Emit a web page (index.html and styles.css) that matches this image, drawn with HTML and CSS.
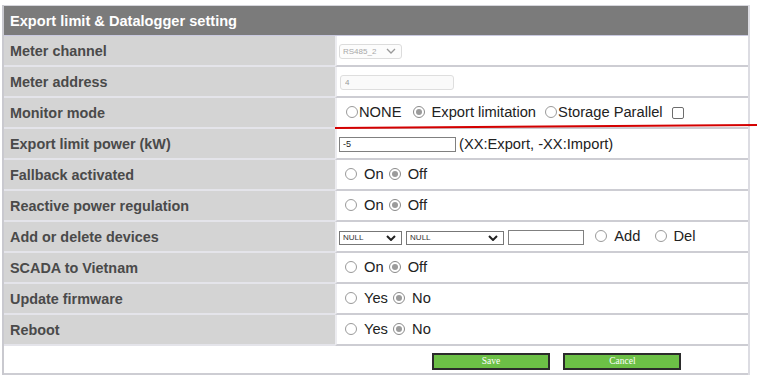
FILE: index.html
```html
<!doctype html>
<html lang="en">
<head>
  <meta charset="UTF-8">
  <title>Export limit &amp; Datalogger setting</title>

  <link rel="stylesheet" href="styles.css">

</head>

<body>

  <div id="pageTop"></div>

  <div id="settingsPanel">
    <table class="settingsTable">
      <tr>
        <th colspan="2" class="tableTitle">Export limit &amp; Datalogger setting</th>
      </tr>
      <tr>
        <td class="label">Meter channel</td>
        <td class="value">
          <select class="smallSelect disabledField" disabled><option>RS485_2</option></select>
        </td>
      </tr>
      <tr>
        <td class="label">Meter address</td>
        <td class="value">
          <input type="text" class="addrInput" value="4" disabled>
        </td>
      </tr>
      <tr>
        <td class="label">Monitor mode</td>
        <td class="value">
          <label class="opt tight"><input type="radio" name="mode">NONE</label>
          <label class="opt modeExport"><input type="radio" name="mode" checked>Export limitation</label>
          <label class="opt tight storage"><input type="radio" name="mode">Storage Parallel</label>
          <input type="checkbox" class="box">
        </td>
      </tr>
      <tr>
        <td class="label">Export limit power (kW)</td>
        <td class="value">
          <input type="text" class="powerInput" value="-5"><span class="hint">(XX:Export, -XX:Import)</span>
        </td>
      </tr>
      <tr>
        <td class="label">Fallback activated</td>
        <td class="value">
          <label class="opt"><input type="radio" name="fallback">On</label>
          <label class="opt"><input type="radio" name="fallback" checked>Off</label>
        </td>
      </tr>
      <tr>
        <td class="label">Reactive power regulation</td>
        <td class="value">
          <label class="opt"><input type="radio" name="reactive">On</label>
          <label class="opt"><input type="radio" name="reactive" checked>Off</label>
        </td>
      </tr>
      <tr>
        <td class="label">Add or delete devices</td>
        <td class="value">
          <select class="smallSelect"><option>NULL</option></select>
          <select class="smallSelect wideSelect"><option>NULL</option></select>
          <input type="text" class="devInput">
          <label class="opt addOpt"><input type="radio" name="dev">Add</label>
          <label class="opt"><input type="radio" name="dev">Del</label>
        </td>
      </tr>
      <tr>
        <td class="label">SCADA to Vietnam</td>
        <td class="value">
          <label class="opt"><input type="radio" name="scada">On</label>
          <label class="opt"><input type="radio" name="scada" checked>Off</label>
        </td>
      </tr>
      <tr>
        <td class="label">Update firmware</td>
        <td class="value">
          <label class="opt"><input type="radio" name="fw">Yes</label>
          <label class="opt"><input type="radio" name="fw" checked>No</label>
        </td>
      </tr>
      <tr>
        <td class="label">Reboot</td>
        <td class="value">
          <label class="opt"><input type="radio" name="reboot">Yes</label>
          <label class="opt"><input type="radio" name="reboot" checked>No</label>
        </td>
      </tr>
      <tr>
        <td colspan="2" class="buttonRow">
          <input type="button" class="greenButton" value="Save">
          <input type="button" class="greenButton" value="Cancel">
        </td>
      </tr>
    </table>
  </div>

  <!-- red pen mark drawn over the screenshot -->
  <svg class="penMark" width="757" height="10" viewBox="0 0 757 10">
    <path d="M335 7 L757 4" stroke="#d40000" stroke-width="2" fill="none"/>
  </svg>

</body>
</html>
```

FILE: styles.css
```css
html, body {
  margin: 0px;
  padding: 0px;
  background-color: #ffffff;
}

body {
  position: relative;
  font-family: "Liberation Sans", Arial, sans-serif;
}

#pageTop {
  height: 5px;
}

#settingsPanel {
  width: 750px;
}

.settingsTable {
  width: 748px;
  margin-left: 2px;
  border-collapse: separate;
  border-spacing: 0;
  border-left: 2px solid #c9c9cf;
  border-right: 2px solid #dcdce2;
}

.tableTitle {
  height: 29px;
  padding: 0 0 0 6px;
  background-color: #7b7b7b;
  color: #ffffff;
  font-size: 14.6px;
  font-weight: bold;
  text-align: left;
  border-top: 1px solid #d6d6dc;
  border-bottom: 1px solid #c9c9e0;
}

.label, .value {
  height: 29px;
  padding: 0;
  border-bottom: 2px solid #cdcdd3;
}

.label {
  width: 325px;
  padding-left: 6px;
  background-color: #d4d4d4;
  color: #4a4a4a;
  font-size: 14.4px;
  font-weight: bold;
  border-bottom-color: #e4e4ea;
}

.value {
  padding-left: 0;
  border-left: 2px solid #ececf0;
  color: #222;
  font-size: 14.7px;
  white-space: nowrap;
}

/* radio and checkbox look like the old grey IE controls */
.opt {
  display: inline-flex;
  align-items: center;
  margin-left: 0;
  margin-right: 1px;
}
.opt:first-child {
  margin-left: 8px;
}
.opt input[type=radio] {
  appearance: none;
  width: 12px;
  height: 12px;
  margin: 0 7px 0 0;
  border: 1px solid #9a9a9a;
  border-radius: 50%;
  background-color: #fff;
  box-sizing: border-box;
  position: relative;
}
.opt input[type=radio]:checked {
  border-color: #8a8a8a;
}
.opt input[type=radio]:checked::after {
  content: "";
  position: absolute;
  left: 2px;
  top: 2px;
  width: 6px;
  height: 6px;
  border-radius: 50%;
  background-color: #9b9b9b;
}
.opt.tight input[type=radio] {
  margin-right: 1px;
}
.tight:first-child {
  margin-left: 9px;
}
.modeExport {
  margin-left: 6px;
}
.storage {
  margin-left: 4px;
}
.storage input[type=radio] {
  margin-right: 3px;
}
.addOpt {
  margin-left: 7px;
  margin-right: 10px;
}

.box {
  appearance: none;
  width: 12px;
  height: 12px;
  margin: 0 0 0 4px;
  border: 1px solid #6d6d6d;
  border-radius: 2px;
  vertical-align: -1px;
}

.smallSelect {
  appearance: none;
  width: 63px;
  height: 14px;
  margin: 0 0 0 2px;
  padding: 0 0 0 3px;
  font-family: "Liberation Sans", Arial, sans-serif;
  font-size: 8px;
  color: #333;
  border: 1px solid #777;
  border-radius: 0;
  background: #fff url("data:image/svg+xml,%3Csvg xmlns='http://www.w3.org/2000/svg' width='10' height='6'%3E%3Cpath d='M1 1 L5 5 L9 1' stroke='%23222' stroke-width='2' fill='none'/%3E%3C/svg%3E") no-repeat right 5px center;
  vertical-align: middle;
}
.wideSelect {
  width: 98px;
  margin-left: 0;
}
.disabledField {
  height: 15px;
  border: 1px solid #dcdcdc;
  border-radius: 3px;
  color: #a8a8a8;
  background-color: #fcfcfc;
  background-image: url("data:image/svg+xml,%3Csvg xmlns='http://www.w3.org/2000/svg' width='10' height='6'%3E%3Cpath d='M1 1 L5 5 L9 1' stroke='%23999' stroke-width='1.3' fill='none'/%3E%3C/svg%3E");
  opacity: 1;
}

.addrInput {
  width: 114px;
  height: 15px;
  margin-left: 3px;
  padding: 0 0 0 4px;
  font-size: 8px;
  color: #999;
  border: 1px solid #dedede;
  border-radius: 3px;
  background-color: #fafafa;
  box-sizing: border-box;
  vertical-align: middle;
}

.powerInput, .devInput {
  height: 15px;
  padding: 0 0 0 3px;
  font-size: 9px;
  font-family: "Liberation Sans", Arial, sans-serif;
  color: #222;
  border: 1px solid #808080;
  box-sizing: border-box;
  vertical-align: middle;
}
.powerInput {
  width: 117px;
  margin-left: 2px;
}
.devInput {
  width: 76px;
  margin-left: 0;
}
.hint {
  margin-left: 3px;
  vertical-align: middle;
}

.buttonRow {
  height: 27px;
  padding: 0 0 0 428px;
  border-bottom: 2px solid #cdcdd3;
  white-space: nowrap;
}

.greenButton {
  width: 118px;
  height: 17px;
  margin: 3px 9px 0 0;
  padding: 0;
  background-color: #6cc046;
  border: 2px solid #2b2b2b;
  border-radius: 0;
  color: #ffffff;
  font-family: "Liberation Serif", "Times New Roman", serif;
  font-size: 9.5px;
}

.penMark {
  position: absolute;
  left: 0;
  top: 121px;
}
```
